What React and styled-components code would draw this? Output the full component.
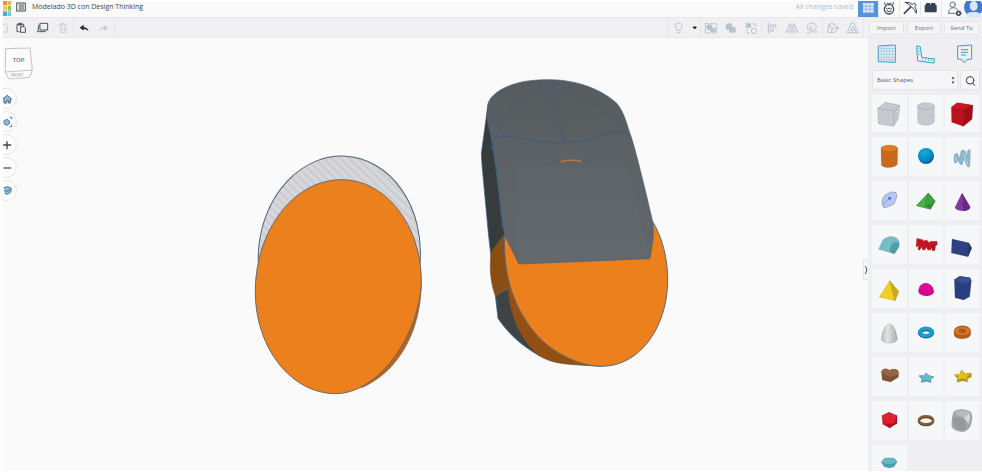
import React from "react";
import styled, { createGlobalStyle, css } from "styled-components";

const GlobalStyle = createGlobalStyle`
  * { box-sizing: border-box; }
  body { margin: 0; background: #fff; font-family: "Open Sans", "Noto Sans", sans-serif; }
  button, select { font: inherit; color: inherit; margin: 0; padding: 0; border: 0; background: none; }
  svg { display: block; flex: none; }
`;

const Page = styled.div`
  display: flex;
  flex-direction: column;
  height: 100vh;
  padding: 1px 0 1px 3px;
  color: #4c5764;
`;

const Header = styled.header`
  display: flex;
  align-items: stretch;
  height: 17px;
  flex: none;
  background: #fafafb;
  border-bottom: 1px solid #e9e9ec;
  overflow: hidden;
`;

const Logo = styled.a`
  display: flex;
  width: 8px;
  margin-right: 5px;
`;

const HeaderButton = styled.button`
  && { background: ${(p) => (p.$active ? "#5793dc" : "transparent")}; }
  && { border-right: ${(p) => (p.$plain ? "0" : "1px solid #e4e6ea")}; }
  display: flex;
  align-items: center;
  justify-content: center;
  width: ${(p) => p.$width || 21}px;
`;

const Title = styled.h1`
  margin: 0 0 0 6px;
  font-size: 7px;
  line-height: 12px;
  font-weight: 500;
  color: #3a4450;
  white-space: nowrap;
`;

const SaveState = styled.span`
  margin: 0 5px 0 auto;
  font-size: 7px;
  line-height: 12px;
  color: #b0bdc8;
  white-space: nowrap;
`;

const Toolbar = styled.div`
  display: flex;
  height: 20px;
  flex: none;
  background: #f0f0f2;
  border-bottom: 1px solid #e8e8eb;
`;

const ToolGroup = styled.div`
  display: flex;
  border-right: 1px solid #e6e6ea;
`;

const ToolButton = styled.button`
  display: flex;
  align-items: center;
  justify-content: center;
  width: ${(p) => p.$width || 20}px;
  overflow: hidden;
`;

const Spacer = styled.div`
  flex: 1;
  border-right: 1px solid #e6e6ea;
`;

const Actions = styled.div`
  display: grid;
  grid-template-columns: repeat(3, 1fr);
  gap: 3px;
  width: 118px;
  padding: 3px 3px 2px 5px;
`;

const ActionButton = styled.button`
  && {
    border: 1px solid #e3e4e8;
    border-radius: 1px;
    background: #f5f5f7;
    font-size: 6px;
    line-height: 10px;
    color: #6a7079;
  }
`;

const Workspace = styled.div`
  display: flex;
  flex: 1;
  min-height: 0;
`;

const Canvas = styled.main`
  position: relative;
  flex: 1;
  min-width: 0;
  overflow: hidden;
  background: #fafafa;
`;

const Scene = styled.svg`
  width: 100%;
  height: 100%;
`;

const ViewControls = styled.nav`
  position: absolute;
  top: 7px;
  left: -7px;
`;

const CubeButton = styled.button`
  && { margin: 0 0 8px 7px; }
  display: block;
`;

const RoundButton = styled.button`
  && {
    margin-bottom: 2px;
    border: 1px solid #e6e6e8;
    background: #fcfcfc;
  }
  display: flex;
  align-items: center;
  justify-content: center;
  width: 21px;
  height: 21px;
  border-radius: 50%;
`;

const CollapseButton = styled.button`
  && {
    border: 1px solid #e6e6e8;
    border-right: 0;
    background: #f6f6f7;
  }
  position: absolute;
  top: calc(50% + 5px);
  right: 0;
  width: 5px;
  height: 20px;
`;

const Sidebar = styled.aside`
  display: flex;
  flex-direction: column;
  width: 114px;
  flex: none;
  padding: 0 2px 0 4px;
  background: #efeff1;
  overflow: hidden;
`;

const Helpers = styled.div`
  display: flex;
  justify-content: space-between;
  height: 32px;
  flex: none;
  padding: 0 5px;
`;

const HelperButton = styled.button`
  display: flex;
  align-items: center;
  justify-content: center;
`;

const Picker = styled.div`
  display: flex;
  gap: 2px;
  height: 20px;
  flex: none;
  margin-bottom: 5px;
`;

const boxed = css`
  background: #f6f6f8;
  border: 1px solid #e4e5e9;
`;

const SelectBox = styled.label`
  ${boxed}
  display: flex;
  flex: 1;
  align-items: center;
  padding: 0 2px 0 4px;
`;

const Select = styled.select`
  && {
    font-size: 6px;
    line-height: 14px;
    color: #515a66;
  }
  flex: 1;
  min-width: 0;
  appearance: none;
`;

const SearchButton = styled.button`
  && { ${boxed} }
  display: flex;
  align-items: center;
  justify-content: center;
  width: 20px;
`;

const ShapeGrid = styled.div`
  display: grid;
  grid-template-columns: repeat(3, 1fr);
  grid-template-rows: 37px;
  grid-auto-rows: 39px;
  gap: 5px 2px;
`;

const ShapeTile = styled.button`
  && { background: #f6f7f9; }
  display: flex;
  justify-content: center;
  overflow: hidden;
`;

/* Drawings are made on a grid with three units to the pixel. */
const Icon = ({ x = 0, y = 0, w = 60, h = 60, color = "#b6c3cf", sw = 4, children }) => (
  <svg width={Math.round(w / 3)} height={Math.round(h / 3)} viewBox={`${x} ${y} ${w} ${h}`}
    fill="none" stroke={color} strokeWidth={sw} strokeLinejoin="round" strokeLinecap="round" aria-hidden="true">
    {children}
  </svg>
);

const groupTools = [
  ["Group", 123, <><rect x="136" y="70" width="34" height="28" strokeDasharray="9 5" strokeWidth="3" /><circle cx="148" cy="81" r="7" fill="#b6c3cf" /><path d="M154 85h11v9h-11z" fill="#b6c3cf" /></>],
  ["Union", 184, <g fill="#b6c3cf"><circle cx="208" cy="79" r="8" /><rect x="210" y="82" width="16" height="13" rx="2" /></g>],
  ["Ungroup", 243, <><path d="M258 69h15v13h-15z" fill="#b6c3cf" strokeWidth="1" strokeDasharray="5 2" /><circle cx="282" cy="92" r="8" strokeWidth="3" /><path d="M281 71h3M287 76v2M260 89v2M263 98h3" /></>],
];
const arrangeTools = [
  ["Align", 306, <path d="M325 68v31M331 74h17v6h-17zM331 87h9v6h-9z" strokeWidth="3" />],
  ["Mirror", 367, <path d="M397 67v34M391 73v22h-11zM403 73v22h11z" strokeWidth="3" />],
  ["Magnet", 427, <><path d="M448 91c-9-9-5-23 8-23 12 0 17 11 11 19-4 6-11 3-10-3 1-7-6-7-7-1-1 7 6 13 14 12h8" strokeWidth="3" /><path d="M443 98h10" strokeWidth="3" /></>],
];
const planeTools = [
  ["Workplane", 491, <path d="M506 95l1-21 12-5 19 14-12 12zM508 75l11 9 18-1M519 84l-2 10" strokeWidth="3" />],
  ["Drop", 551, <path d="M577 68h7l12 29h-31zM580 80l-6 11h14z" strokeWidth="3" />],
];

const outline = { stroke: "#333", strokeOpacity: 0.4, strokeWidth: 1, strokeLinejoin: "round" };

const shapes = [
  ["Box hole", 35, 15, <g {...outline} fill="url(#tileHatch)"><path d="M52 55l23-18 44 9-6 42-13 21-46-7z" /><path d="M52 55l49 8 18-17M101 63l-1 46" fill="none" /></g>],
  ["Cylinder hole", 146, 15, <g {...outline} fill="url(#tileHatch)"><path d="M172 48v47c5 14 44 14 50 0V48z" /><ellipse cx="197" cy="48" rx="25" ry="10" /></g>],
  ["Box", 255, 15, <g {...outline}><path d="M274 52l18-14 46 8-2 41-26 22-35-12z" fill="#bb111d" /><path d="M274 52l38 8 26-14-46-8z" fill="#cb1724" /><path d="M312 60l26-14-2 41-26 22z" fill="#a30d18" /></g>],
  ["Cylinder", 35, 141, <g {...outline}><path d="M62 175l1 50c8 12 41 9 48-2l1-48z" fill="#c8691c" /><ellipse cx="87" cy="175" rx="25" ry="10" fill="#e27d23" /></g>],
  ["Sphere", 146, 141, <circle cx="197" cy="198" r="24" fill="url(#sphereBlue)" />],
  ["Scribble", 255, 141, <g><path d="M282 196q6-10 12-3l5 12 4-22q8-7 13 1l4 14 3-17q6-5 8 0l-1 47q-4 7-9 0l-10-22-3 17q-5 5-9-2l-5-10-4 7q-8 3-8-4z" fill="#8cb8ce" {...outline} /><path d="M287 200l1 12M311 192l12 30" stroke="#bcd7e5" strokeWidth="3" strokeLinecap="round" /></g>],
  ["Sketch", 35, 273, <g {...outline} fill="#b6c5fb"><path d="M66 344c-3-8 0-18 7-28l17-9q8-3 12 0h5l3 12-9 23-14 7-16 5z" strokeWidth="2" /><path d="M66 344l20-17" fill="none" strokeWidth="2" /><circle cx="88" cy="325" r="4" fill="#667099" /></g>],
  ["Roof", 146, 273, <g {...outline}><path d="M168 347l36-38 21 25-14 24z" fill="#318f36" /><path d="M168 347l36-38-10 38 17 11z" fill="#46b247" /><path d="M204 309l21 25-8 7-23 6z" fill="#3ba43e" /></g>],
  ["Cone", 255, 273, <g {...outline}><path d="M306 309l-21 43c2 14 42 14 46 0z" fill="#81399b" /><path d="M306 309l4 54c12 0 19-5 21-11z" fill="#6b2987" stroke="none" /></g>],
  ["Round roof", 35, 15, <g {...outline}><path d="M55 88l12-27c13-14 31-14 41-7 8 6 10 13 8 26l-14 21z" fill="#75bec6" /><path d="M90 96c-2-22 10-32 25-27v11l-13 21z" fill="#519da9" /></g>],
  ["Text", 146, 15, <g fill="#c41722" {...outline}><path d="M169 55l19 4 2 6 3-5 10 2 3 7 4-5h20l1 11-5 2-2 14-7 3-4-9-3 6-8-1-4-8-5 9-7-2-2-8-6 10-5-2 1-11-7 3z" /><path d="M176 63l11 2-4 9M194 67l1 12M203 67l1 13M210 70l7 11 2-10M223 71l-3 14" stroke="#681018" fill="none" strokeWidth="2" /></g>],
  ["Wedge", 255, 15, <g {...outline}><path d="M276 57l50 11 9 16-11 26-50-11z" fill="#2d4283" /><path d="M326 68l9 16-11 26z" fill="#24366f" /></g>],
  ["Pyramid", 35, 147, <g {...outline}><path d="M88 182l-31 49 47 11 11-27z" fill="#efcf21" /><path d="M88 182l16 60 11-27z" fill="#cead12" /></g>],
  ["Half sphere", 146, 147, <g><path d="M174 215c1-34 42-33 47 0-5 17-40 18-47 0z" fill="#ce078d" /><path d="M177 207c3-23 34-23 40-2-5 9-34 11-40 2z" fill="#e00998" /></g>],
  ["Polygon", 255, 147, <g {...outline}><path d="M283 179l16-10 31 4 4 9-5 48-18 10-26-7z" fill="#2b3e80" /><path d="M283 179l16-10 31 4 4 9-17 11z" fill="#394f94" /><path d="M317 193l-3 46" /></g>],
  ["Paraboloid", 35, 279, <path {...outline} d="M63 359c2-24 10-46 24-47s21 23 24 47c-7 14-41 14-48 0z" fill="url(#paraboloid)" />],
  ["Torus", 146, 279, <g fill="none"><ellipse cx="197" cy="338" rx="18" ry="11" stroke="#126591" strokeWidth="13" /><ellipse cx="197" cy="336" rx="18" ry="11" stroke="#16a0d4" strokeWidth="10" /></g>],
  ["Tube", 255, 279, <g><path d="M282 334c2-22 50-22 50 0v9c-2 18-50 18-50 0z" fill="#b45d17" {...outline} /><ellipse cx="307" cy="333" rx="24" ry="13" fill="#dd7622" {...outline} /><ellipse cx="307" cy="333" rx="11" ry="6" fill="#a65b22" {...outline} /></g>],
  ["Heart", 35, 36, <g {...outline}><path d="M63 80c6-12 16-9 25-4 14-8 26-2 27 7l-1 14-23 14-25-6z" fill="#7d5133" /><path d="M63 80c6-12 16-9 25-4 14-8 26-2 27 7-3 8-15 11-25 13-11-4-20-9-27-16z" fill="#95673f" stroke="none" /></g>],
  ["Thin star", 146, 36, <g {...outline}><path d="M176 93l17 0 4-9 8 8 16 4-10 7 1 10-14-4-15 4 2-11z" fill="#459faa" /><path d="M176 91l17 0 4-8 8 8 16 4-10 6 1 9-14-4-15 4 2-10z" fill="#62bac6" /></g>],
  ["Star", 255, 36, <g {...outline}><path d="M283 92l17-2 4-15 12 11 18-1v11l-13 6 2 9-15-4-17 5 2-13z" fill="#b99608" /><path d="M283 88l17-1 4-12 12 11 18 0-13 9 2 10-15-4-17 4 3-11z" fill="#e0c21b" /></g>],
  ["Icosahedron", 35, 168, <g {...outline}><path d="M65 212l21-10 24 10v23l-22 14-21-11z" fill="#d91626" /><path d="M65 212l11 24h25l9-24-24-10z" fill="#e0202f" /><path d="M76 236l12 13 22-14v-23l-9 24z" fill="#b90c1c" /></g>],
  ["Ring", 146, 168, <g fill="none"><ellipse cx="197" cy="229" rx="22" ry="12" stroke="#65462a" strokeWidth="6" /><ellipse cx="197" cy="225" rx="22" ry="12" stroke="#855d38" strokeWidth="6" /></g>],
  ["Die", 255, 168, <g><path d="M280 203c5-12 38-13 52-2 6 10 5 29-2 44-8 14-24 18-32 14-16-3-22-10-23-18q0-20 5-38z" fill="#a2a6a8" {...outline} /><path d="M283 202c12-9 39-7 47 0q-5 15-12 17-24-3-35-17z" fill="#b6babc" /><path d="M312 218l17-13c2 14-1 24-4 31z" fill="#d5d9db" /><path d="M281 217q18-3 31 4 8 12 5 30-12 8-27 1-12-10-9-35z" fill="#95999c" /></g>],
  ["Gem", 35, 300, <g {...outline}><path d="M63 352q5-9 13-13h22q10 5 12 12l-9 14-13 4-16-4z" fill="#47a4b2" /><path d="M63 352q5-9 13-13h22q10 5 12 12l-13 6H76z" fill="#62bac6" /></g>],
];

const GridGlyph = () => <><path d="M607 9h32v29h-32z" fill="#dfeafb" stroke="none" /><path d="M617 9v29M628 9v29M607 19h32M607 28h32" stroke="#76a3df" strokeWidth="2" /></>;

function SceneDrawing() {
  return (
    <Scene viewBox="3 38 865 433" preserveAspectRatio="xMidYMid meet" role="img" aria-label="Modelado 3D">
      <defs>
        <pattern id="hatch" width="18" height="18" patternUnits="userSpaceOnUse" patternTransform="rotate(40)">
          <rect width="18" height="18" fill="#d8d7da" /><rect width="18" height="8" fill="#cdccd1" />
        </pattern>
        <pattern id="tileHatch" width="8" height="8" patternUnits="userSpaceOnUse" patternTransform="rotate(38)">
          <rect width="8" height="8" fill="#d3d6dc" /><rect width="8" height="4" fill="#b7bcc5" />
        </pattern>
        <radialGradient id="sphereBlue" cx=".4" cy=".3" r=".7"><stop stopColor="#17a8df" /><stop offset=".6" stopColor="#078fc8" /><stop offset="1" stopColor="#07618e" /></radialGradient>
        <linearGradient id="paraboloid"><stop stopColor="#b8b9bb" /><stop offset=".4" stopColor="#e2e3e4" /><stop offset="1" stopColor="#aaa" /></linearGradient>
        <linearGradient id="body" x2="0" y2="1"><stop stopColor="#565c5e" /><stop offset=".5" stopColor="#5d6366" /><stop offset="1" stopColor="#606669" /></linearGradient>
        <linearGradient id="sheen" x2="0" y2="1"><stop stopColor="#70777b" stopOpacity="0" /><stop offset="1" stopColor="#70777b" stopOpacity=".15" /></linearGradient>
      </defs>
      <g transform="translate(245 145) scale(.33333)" stroke="#456480" strokeWidth="3">
        <ellipse cx="283" cy="332" rx="243" ry="299" transform="rotate(4 283 332)" fill="url(#hatch)" />
        <path d="M529 410C529 570 450 686 350 728L340 600z" fill="#b4641c" stroke="#7f6c5c" strokeWidth="2" />
        <path d="M290 104C422 104 529 241 529 410C524 570 400 746 272 746C139 746 31 609 31 440C31 255 147 104 290 104z" fill="#ec801d" stroke="#65686a" />
      </g>
      <g transform="translate(470 70) scale(.33333)" strokeLinejoin="round">
        <path d="M53 110L34 250L36 285L55 490L63 560L110 500L98 400L66 215z" fill="#363b3c" stroke="#3f5f7b" strokeWidth="2" />
        <path d="M115 655L76 677L84 745C110 785 150 825 210 858L190 750z" fill="#3d4446" stroke="#3f5f7b" strokeWidth="2" />
        <path d="M104 492L64 545C57 595 62 640 76 677L118 652L125 560z" fill="#8c4d13" stroke="#70512f" strokeWidth="2" />
        <path d="M113 640C115 740 160 820 205 855C250 885 300 883 395 889L200 650z" fill="#944f13" stroke="#5c5040" strokeWidth="2" />
        <path d="M104 492L550 458C580 510 593 570 593 630C593 770 510 889 395 889C330 889 250 850 200 795C150 735 98 650 104 492z" fill="#ec801d" stroke="#586a78" strokeWidth="3" />
        <path d="M53 105C60 70 110 45 160 35C215 26 270 28 300 35C350 42 410 70 440 100C465 130 470 165 485 205C505 270 535 400 549 458L550 500L540 566L147 582L104 496L98 460L80 310L66 215L51 145z" fill="url(#body)" stroke="#3f5f7b" strokeWidth="2" />
        <path d="M147 582L138 480C125 330 137 240 180 180L360 190L450 205L540 566z" fill="url(#sheen)" />
        <g fill="none" stroke="#3c5b7b" strokeWidth="3">
          <path d="M223 35C246 85 266 135 283 219M67 210C85 195 115 198 143 203C250 224 303 226 388 198C430 184 448 179 477 197" />
          <path d="M62 240C90 150 145 70 220 57C285 49 305 70 340 82C383 103 440 157 475 189M226 286Q296 258 374 281" strokeWidth="2" />
          <path d="M66 215L80 310L98 475" />
        </g>
        <path d="M272 275Q302 267 335 274" fill="none" stroke="#bd7438" strokeWidth="5" />
      </g>
    </Scene>
  );
}

const Tool = ({ name, x, children }) => (
  <ToolButton aria-label={name}><Icon x={x} y={53}>{children}</Icon></ToolButton>
);

export default function App() {
  return (
    <Page>
      <GlobalStyle />
      <Header>
        <Logo href="#" aria-label="Tinkercad">
          <svg width="8" height="16" viewBox="9 3 24 48"><path d="M9 3h12v13H9z" fill="#ef903c" /><path d="M23 3h10v13H23z" fill="#f4b13c" /><path d="M9 18h12v14H9z" fill="#f6cf52" /><path d="M23 18h10v14H23z" fill="#8bc75c" /><path d="M9 34h12v14H9z" fill="#43afe0" /><path d="M23 34h10v14H23z" fill="#74caed" /></svg>
        </Logo>
        <HeaderButton $width={10} $plain aria-label="Menu">
          <Icon x={50} y={3} w={30} h={48} color="#414a53" sw={3}><path d="M52 9h26v24H52zM60 15h13M60 21h13M60 27h13M56 15h0M56 21h0M56 27h0" /></Icon>
        </HeaderButton>
        <Title>Modelado 3D con Design Thinking</Title>
        <SaveState>All changes saved</SaveState>
        <HeaderButton $active aria-label="Design"><Icon x={592} y={3} w={60} h={48}><GridGlyph /></Icon></HeaderButton>
        <HeaderButton aria-label="Simulate">
          <Icon x={657} y={3} w={60} h={48} color="#38495a"><circle cx="687" cy="28" r="14" /><path d="M681 10q6 5 12 0M674 8q-2 6 4 8M700 8q2 6-4 8M678 24q5 7 9 0 5 7 9 0M680 33q7 5 14 0" strokeWidth="3" /></Icon>
        </HeaderButton>
        <HeaderButton aria-label="Blocks">
          <Icon x={720} y={3} w={60} h={48} color="#38495a"><path d="M733 40l24-24" strokeWidth="5" /><path d="M736 7q14-2 22 7l4-5 7 6-5 5q8 9 5 20-5-12-14-19-7-8-19-14z" fill="#fafafb" strokeWidth="3" /></Icon>
        </HeaderButton>
        <HeaderButton aria-label="Bricks">
          <Icon x={784} y={3} w={60} h={48} color="#344352"><path d="M797 16h4v-5h9v5h6v-5h9v5h4v19h-32z" fill="#344352" /></Icon>
        </HeaderButton>
        <HeaderButton $plain $width={22} aria-label="Invite">
          <Icon x={849} y={3} w={63} h={48} color="#687584" sw={3}><circle cx="878" cy="14" r="8" /><path d="M866 40c-2-21 25-21 26-9M866 40h20" /><circle cx="896" cy="40" r="7" fill="#3a4a5a" stroke="#3a4a5a" /><path d="M893 40h6M896 37v6" stroke="#fff" strokeWidth="2" /></Icon>
        </HeaderButton>
        <HeaderButton $plain $width={18} aria-label="Profile">
          <svg width="18" height="16" viewBox="912 3 54 48"><circle cx="940" cy="22" r="28" fill="#3e78cf" /><ellipse cx="941" cy="18" rx="12" ry="15" fill="#d8e8ff" /><path d="M918 51q0-13 16-15h14q16 2 16 15z" fill="#d8e8ff" /></svg>
        </HeaderButton>
      </Header>

      <Toolbar>
        <ToolGroup>
          <ToolButton $width={8} aria-label="Copy"><Icon x={9} y={53} w={24}><path d="M9 72h8l5 5v18H9" strokeWidth="2" /></Icon></ToolButton>
          <ToolButton aria-label="Paste"><Icon x={34} y={53} color="#46545d" sw={3}><path d="M58 94h-6V72h20v5M57 69h10v5H57zM64 79h10l3 3v14H64z" /></Icon></ToolButton>
          <ToolButton $width={22} aria-label="Duplicate"><Icon x={98} y={53} color="#46545d" sw={3}><path d="M123 69h22v20h-22zM119 74l-4 20h22l3-3" /></Icon></ToolButton>
          <ToolButton aria-label="Delete"><Icon x={158} y={53} color="#c9d1d8" sw={3}><path d="M176 73h24M179 73l2 23h15l2-23M184 73v-4h8v4M185 79v12M192 79v12" /></Icon></ToolButton>
        </ToolGroup>
        <ToolGroup>
          <ToolButton aria-label="Undo"><Icon x={222} y={53} color="#23343d"><path d="M264 90q-2-8-12-8h-11M249 76l-8 6 8 6z" fill="#23343d" strokeWidth="3" /></Icon></ToolButton>
          <ToolButton aria-label="Redo"><Icon x={282} y={53} color="#c2d0d9"><path d="M299 90q2-8 12-8h11M314 76l8 6-8 6z" fill="#c2d0d9" strokeWidth="3" /></Icon></ToolButton>
        </ToolGroup>
        <Spacer />
        <ToolGroup>
          <Tool name="Show all" x={27}><path d="M50 89c-9-15-2-21 6-21s15 7 6 21zM52 97h8" strokeWidth="3" /></Tool>
          <ToolButton $width={11} aria-label="Options"><Icon x={83} y={53} w={33} color="#222"><path d="M96 80h9l-4 5z" fill="#222" strokeWidth="3" /></Icon></ToolButton>
        </ToolGroup>
        <ToolGroup>{groupTools.map(([n, x, d]) => <Tool key={n} name={n} x={x}>{d}</Tool>)}</ToolGroup>
        <ToolGroup>{arrangeTools.map(([n, x, d]) => <Tool key={n} name={n} x={x}>{d}</Tool>)}</ToolGroup>
        <ToolGroup>{planeTools.map(([n, x, d]) => <Tool key={n} name={n} x={x}>{d}</Tool>)}</ToolGroup>
        <Actions>
          <ActionButton>Import</ActionButton>
          <ActionButton>Export</ActionButton>
          <ActionButton>Send To</ActionButton>
        </Actions>
      </Toolbar>

      <Workspace>
        <Canvas>
          <SceneDrawing />
          <ViewControls aria-label="View">
            <CubeButton aria-label="View cube">
              <svg width="32" height="35" viewBox="9 21 96 105" fill="#fbfbfb" stroke="#a5a7aa" strokeWidth="2">
                <path d="M17 32L90 30L97 96L89 118L27 123L16 102z" /><path d="M16 102L97 96" />
                <text x="38" y="72" fontFamily="Open Sans, sans-serif" fontSize="18" fontWeight="600" fill="#70747a" stroke="none">TOP</text>
                <text x="32" y="116" fontFamily="Open Sans, sans-serif" fontSize="12" fill="#777b80" stroke="none" transform="rotate(-3 32 116)">FRONT</text>
              </svg>
            </CubeButton>
            <RoundButton aria-label="Home"><Icon x={-12} y={151} color="#48647e" sw={3}><path d="M4 182l15-12 13 12M9 181v12h8v-9h5v9h6v-12" fill="#8bc2eb" /></Icon></RoundButton>
            <RoundButton aria-label="Fit"><Icon x={-12} y={220} color="#587795" sw={3}><path d="M10 246l8-4 7 5v8l-7 5-8-4z" fill="#83bce8" /><path d="M27 236h5v5M32 259v5h-5" /></Icon></RoundButton>
            <RoundButton aria-label="Zoom in"><Icon x={-12} y={289} color="#444"><path d="M8 319h21M18 309v21" /></Icon></RoundButton>
            <RoundButton aria-label="Zoom out"><Icon x={-12} y={358} color="#666"><path d="M9 388h20" /></Icon></RoundButton>
            <RoundButton aria-label="Projection"><Icon x={-12} y={427} color="#526e87" sw={3}><path d="M9 447l11-3 10 5v10l-10 8-8-3" fill="#88bee5" /><path d="M10 456q8 4 14 0l6-6" /></Icon></RoundButton>
          </ViewControls>
          <CollapseButton aria-label="Collapse panel"><Icon x={0} y={0} w={12} h={36} color="#505860" sw={3}><path d="M4 7q9 11 0 22" /></Icon></CollapseButton>
        </Canvas>

        <Sidebar>
          <Helpers>
            <HelperButton aria-label="Workplane"><Icon x={650} y={130} color="#35a3ca" sw={3}><path d="M663 136v47M671 135v49M679 135v49M687 134v50M696 134v51M655 144h50M655 152h50M655 161h50M655 170h50M655 177h50" strokeWidth="1" /><path d="M655 136l50-3v52l-50-2z" /></Icon></HelperButton>
            <HelperButton aria-label="Ruler"><Icon x={770} y={130} color="#35a3ca" sw={3}><path d="M773 136l10 2 4 32 38 5-1 12-48-6z" /><path d="M775 145h5M776 153h5M777 161h5M790 174v4M799 175v4M808 176v4M817 177v4" strokeWidth="2" /></Icon></HelperButton>
            <HelperButton aria-label="Notes"><Icon x={884} y={130} color="#35a3ca" sw={3}><path d="M893 136l41-3v42l-14 2-8 9-7-9-12-2zM903 147h19M903 155h19M903 163h13" /></Icon></HelperButton>
          </Helpers>
          <Picker>
            <SelectBox>
              <Select aria-label="Shape library" defaultValue="basic"><option value="basic">Basic Shapes</option></Select>
              <Icon w={12} h={36} color="#343c44" sw={2}><path d="M4 13l2-4 2 4zM4 24l2 4 2-4z" fill="#343c44" /></Icon>
            </SelectBox>
            <SearchButton aria-label="Search"><Icon x={900} y={211} w={57} h={57} color="#323a42" sw={3}><circle cx="927" cy="239" r="11" /><path d="M935 247l6 7" /></Icon></SearchButton>
          </Picker>
          <ShapeGrid>
            {shapes.map(([name, x, y, drawing]) => (
              <ShapeTile key={name} aria-label={name}>
                <svg width="35" height="39" viewBox={`${x} ${y} 105 117`} aria-hidden="true">{drawing}</svg>
              </ShapeTile>
            ))}
          </ShapeGrid>
        </Sidebar>
      </Workspace>
    </Page>
  );
}
